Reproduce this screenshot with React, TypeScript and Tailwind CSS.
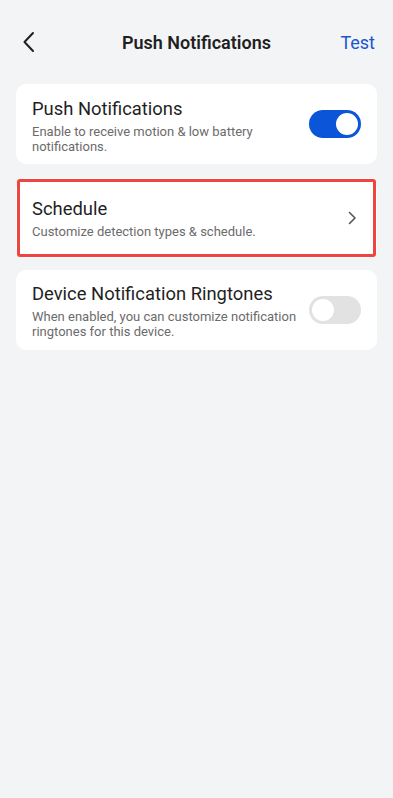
import React from "react";

function Toggle({ on }: { on: boolean }) {
  return (
    <div
      className={
        "flex h-[28px] w-[52px] shrink-0 items-center rounded-full px-[3px] " +
        (on ? "justify-end bg-[#0a55d8]" : "justify-start bg-[#e2e2e2]")
      }
    >
      <div className="h-[22px] w-[22px] rounded-full bg-white" />
    </div>
  );
}

function Row({
  title,
  subtitle,
  right,
  shift,
}: {
  title: string;
  subtitle: string;
  right: React.ReactNode;
  shift?: boolean;
}) {
  return (
    <div className="flex h-[80px] items-center justify-between rounded-[10px] bg-white pl-4 pr-4">
      <div className={"flex min-w-0 flex-1 flex-col " + (shift ? "pt-[3px]" : "")}>
        <div className="whitespace-nowrap text-[18.4px] leading-[24px] text-[#1f1f1f]">{title}</div>
        <div className="mt-[3px] max-w-[266px] text-[13px] leading-[15px] text-[#6b6b6b]">
          {subtitle}
        </div>
      </div>
      {right}
    </div>
  );
}

export default function App() {
  return (
    <div
      className="min-h-[798px] w-full bg-[#f3f4f6]"
      style={{ fontFamily: "Roboto, 'Noto Sans', sans-serif" }}
    >
      <div className="grid h-[84px] grid-cols-[1fr_auto_1fr] items-center">
        <div className="pl-[22px]">
          <svg width="14" height="22" viewBox="0 0 14 22" fill="none">
            <path
              d="M11 2 L2.5 11 L11 20"
              stroke="#1f1f1f"
              strokeWidth="2"
              strokeLinecap="round"
              strokeLinejoin="round"
            />
          </svg>
        </div>
        <div className="text-[18px] font-semibold text-[#1f1f1f]">Push Notifications</div>
        <div className="pr-[18px] text-right text-[18px] text-[#1a56cc]">Test</div>
      </div>

      <div className="flex flex-col px-4">
        <Row
          title="Push Notifications"
          subtitle="Enable to receive motion & low battery notifications."
          right={<Toggle on={true} />}
          shift
        />
        <div className="relative mt-[14px]">
          <Row
            title="Schedule"
            subtitle="Customize detection types & schedule."
            right={
              <svg width="10" height="14" viewBox="0 0 10 14" fill="none" className="mr-[4px] shrink-0">
                <path
                  d="M2.5 1.5 L8 7 L2.5 12.5"
                  stroke="#555"
                  strokeWidth="1.6"
                  strokeLinecap="round"
                  strokeLinejoin="round"
                />
              </svg>
            }
          />
          <div className="pointer-events-none absolute inset-y-[1px] left-[1px] right-[1px] rounded-[3px] border-[3px] border-[#ee4540]" />
        </div>
        <div className="mt-[12px]">
          <Row
            title="Device Notification Ringtones"
            subtitle="When enabled, you can customize notification ringtones for this device."
            right={<Toggle on={false} />}
          />
        </div>
      </div>
    </div>
  );
}
